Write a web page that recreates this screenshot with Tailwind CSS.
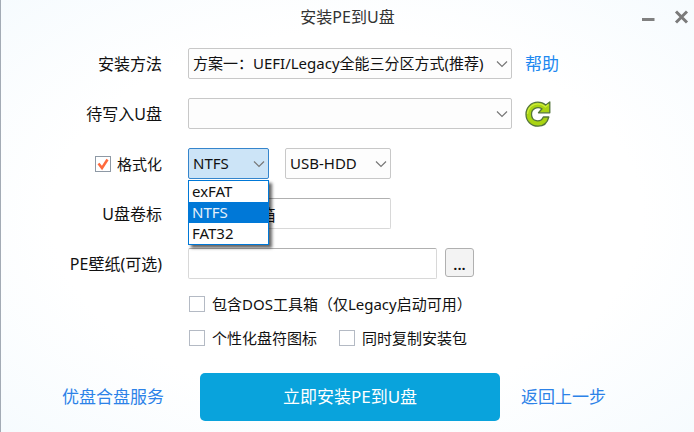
<!DOCTYPE html>
<html lang="zh-CN">
<head>
  <meta charset="UTF-8" />
  <meta name="viewport" content="width=device-width, initial-scale=1.0" />
  <title>安装PE到U盘</title>
  <script src="https://cdn.jsdelivr.net/npm/@tailwindcss/browser@4"></script>
</head>
<body class="min-h-screen border-l border-[#a3abb5] bg-[radial-gradient(ellipse_at_center,#ffffff_60%,#f6fbfe_100%)] font-['Noto_Sans','Noto_Sans_CJK_SC',sans-serif] text-[15px] text-[#111111]">

  <!-- Title bar -->
  <header class="grid h-[34px] grid-cols-[1fr_auto_1fr] items-center">
    <h1 class="col-start-2 px-1 text-[16px] leading-6 text-[#333333]">安装PE到U盘</h1>
    <div class="flex items-center justify-end gap-2">
      <button type="button" aria-label="最小化" class="flex size-6 items-center justify-center">
        <svg class="size-4" viewBox="0 0 16 16"><path d="M0 10.500H12.500" stroke="#808080" stroke-width="3" /></svg>
      </button>
      <button type="button" aria-label="关闭" class="flex size-6 items-center justify-center">
        <svg class="size-4" viewBox="0 0 16 16"><path d="M2 2.500L13 13.500M13 2.500L2 13.500" stroke="#7a7a7a" stroke-width="3" /></svg>
      </button>
    </div>
  </header>

  <form>
    <div class="grid grid-cols-[161px_1fr] items-center gap-x-[26px] gap-y-[19px] pt-[14px] pr-[126px]">

      <!-- Install method -->
      <label for="method" class="text-right text-[16px] leading-6">安装方法</label>
      <div class="flex items-center gap-[13px]">
        <div class="relative flex-1">
          <select id="method" class="h-[31px] w-full appearance-none rounded-[2px] border border-[#c8c8c8] bg-[#fdfdfd] pl-1">
            <option>方案一：UEFI/Legacy全能三分区方式(推荐)</option>
          </select>
          <svg class="pointer-events-none absolute top-2.5 right-1 size-3" viewBox="0 0 12 12" fill="none"><path d="M1 3.500L6 8.500L11 3.500" stroke="#777777" stroke-width="1.200" /></svg>
        </div>
        <a href="#" class="w-[43px] text-[17px] leading-6 text-[#2088f0]">帮助</a>
      </div>

      <!-- Target drive -->
      <label for="drive" class="text-right text-[16px] leading-6">待写入U盘</label>
      <div class="flex items-center gap-[13px]">
        <div class="relative flex-1">
          <select id="drive" class="h-[31px] w-full appearance-none rounded-[2px] border border-[#c8c8c8] bg-[#fdfdfd] pl-1">
            <option></option>
          </select>
          <svg class="pointer-events-none absolute top-2.5 right-1 size-3" viewBox="0 0 12 12" fill="none"><path d="M1 3.500L6 8.500L11 3.500" stroke="#777777" stroke-width="1.200" /></svg>
        </div>
        <button type="button" aria-label="刷新" class="w-[43px]">
          <svg class="block size-[26px]" viewBox="0 0 26 26">
            <path d="M24.800 1V11.800H13.500L17 7.800C12 4.800 6.500 8 6.500 13.200C6.500 20.500 15.500 22.300 18.300 16H23.800C22.500 21.500 18.500 25.200 13 25.200C6 25.200 1 20 1 13.200C1 6.500 6.200 1.200 12.800 1.200C16 1.200 18.500 2 20.800 4Z" fill="#a9d412" stroke="#54753d" stroke-width="1.300" stroke-linejoin="round" />
            <path d="M2.500 13C2.800 6.500 7.500 2.800 12.800 2.800C16.500 2.800 18.500 4 20.500 6L23.500 3.500" fill="none" stroke="#cdec3c" stroke-width="1.200" />
          </svg>
        </button>
      </div>

      <!-- Format -->
      <label class="flex items-center justify-end gap-[6px] leading-6">
        <span class="grid size-4 place-items-center">
          <input type="checkbox" checked class="col-start-1 row-start-1 size-4 appearance-none border border-[#8e99a5] bg-white" />
          <svg class="pointer-events-none col-start-1 row-start-1 size-4" viewBox="0 0 16 16" fill="none"><path d="M3.500 7.500L7 12L12.500 3.500" stroke="#ff6a3d" stroke-width="2.500" /></svg>
        </span>
        格式化
      </label>
      <div class="flex items-center gap-4">
        <div class="relative w-[81px]">
          <select aria-label="文件系统" class="h-[31px] w-full appearance-none rounded-[2px] border border-[#3585cc] bg-[#cce4f7] pl-1">
            <option>exFAT</option>
            <option selected>NTFS</option>
            <option>FAT32</option>
          </select>
          <svg class="pointer-events-none absolute top-2.5 right-1 size-3" viewBox="0 0 12 12" fill="none"><path d="M1 3.500L6 8.500L11 3.500" stroke="#777777" stroke-width="1.200" /></svg>
          <ul role="listbox" aria-label="文件系统" class="absolute top-8 left-0 z-10 w-full border border-[#0078d7] bg-white leading-[21px] shadow-[3px_3px_3px_rgba(0,0,0,0.6)]">
            <li role="option" class="pl-[3px]">exFAT</li>
            <li role="option" aria-selected="true" class="bg-[#0078d7] pl-[3px] text-[#e4f1fb]">NTFS</li>
            <li role="option" class="pl-[3px]">FAT32</li>
          </ul>
        </div>
        <div class="relative w-[106px]">
          <select aria-label="启动模式" class="h-[31px] w-full appearance-none rounded-[2px] border border-[#c8c8c8] bg-[#fdfdfd] pl-1">
            <option>USB-HDD</option>
          </select>
          <svg class="pointer-events-none absolute top-2.5 right-1 size-3" viewBox="0 0 12 12" fill="none"><path d="M1 3.500L6 8.500L11 3.500" stroke="#777777" stroke-width="1.200" /></svg>
        </div>
      </div>

      <!-- Volume label -->
      <label for="volume" class="text-right text-[16px] leading-6">U盘卷标</label>
      <input id="volume" type="text" value="微PE工具箱" class="h-[31px] w-[203px] rounded-[2px] border border-[#d8d8d8] border-t-[#b0b0b0] bg-white px-1 text-[16px]" />

      <!-- Wallpaper -->
      <label for="wallpaper" class="text-right text-[16px] leading-6">PE壁纸(可选)</label>
      <div class="flex items-start gap-2">
        <input id="wallpaper" type="text" class="h-[31px] w-[249px] rounded-[2px] border border-[#d8d8d8] border-t-[#b0b0b0] bg-white px-1" />
        <button type="button" aria-label="浏览" class="h-[29px] w-[29px] rounded-[3px] border border-[#b0b0b0] bg-[#f3f3f3] pt-1 font-semibold">...</button>
      </div>
    </div>

    <!-- Extra options -->
    <div class="flex flex-col gap-[10px] pt-[13px] pl-[188px] leading-6">
      <label class="flex items-center gap-[7px]">
        <input type="checkbox" class="size-4 appearance-none border border-[#b4bac4] bg-white" />
        包含DOS工具箱（仅Legacy启动可用）
      </label>
      <div class="flex gap-[22px]">
        <label class="flex items-center gap-[7px]">
          <input type="checkbox" class="size-4 appearance-none border border-[#b4bac4] bg-white" />
          个性化盘符图标
        </label>
        <label class="flex items-center gap-[7px]">
          <input type="checkbox" class="size-4 appearance-none border border-[#b4bac4] bg-white" />
          同时复制安装包
        </label>
      </div>
    </div>

    <!-- Actions -->
    <div class="grid grid-cols-[1fr_300px_1fr] items-center pt-[23px] pl-[5px] text-[17px]">
      <a href="#" class="justify-self-end pr-9 text-[#2c82e8]">优盘合盘服务</a>
      <button type="submit" class="h-12 rounded-[5px] bg-[#09a3dc] text-white">立即安装PE到U盘</button>
      <a href="#" class="justify-self-start pl-[21px] text-[#2c82e8]">返回上一步</a>
    </div>
  </form>

</body>
</html>
